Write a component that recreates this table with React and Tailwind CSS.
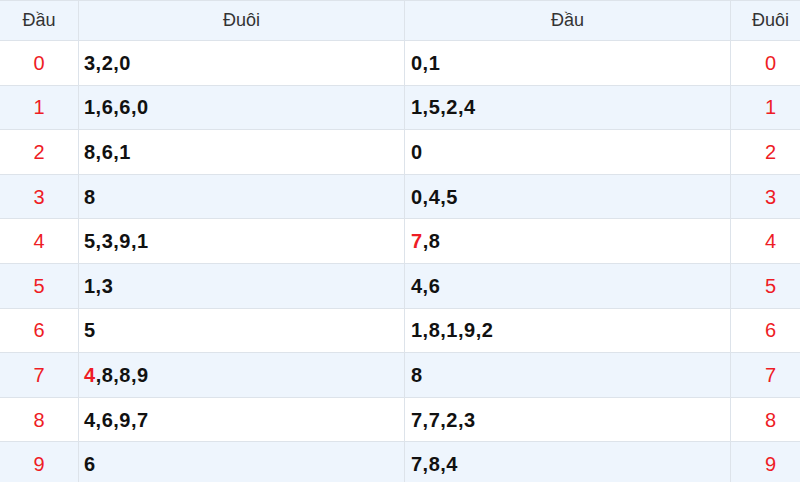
import React from "react";

const rows = [
  { d: "0", left: [["3,2,0"]], right: [["0,1"]] },
  { d: "1", left: [["1,6,6,0"]], right: [["1,5,2,4"]] },
  { d: "2", left: [["8,6,1"]], right: [["0"]] },
  { d: "3", left: [["8"]], right: [["0,4,5"]] },
  { d: "4", left: [["5,3,9,1"]], right: [["7", true], [",8"]] },
  { d: "5", left: [["1,3"]], right: [["4,6"]] },
  { d: "6", left: [["5"]], right: [["1,8,1,9,2"]] },
  { d: "7", left: [["4", true], [",8,8,9"]], right: [["8"]] },
  { d: "8", left: [["4,6,9,7"]], right: [["7,7,2,3"]] },
  { d: "9", left: [["6"]], right: [["7,8,4"]] },
];

function Parts({ parts }) {
  return parts.map(([t, red], i) => (
    <span key={i} className={red ? "text-[#ee1c25]" : ""}>{t}</span>
  ));
}

export default function App() {
  return (
    <div className="w-[800px] h-[482px] overflow-hidden bg-white font-['Liberation_Sans',Arial,sans-serif]">
      <table className="w-[811px] -ml-px border-collapse table-fixed">
        <colgroup>
          <col className="w-[79px]" />
          <col className="w-[326px]" />
          <col className="w-[326px]" />
          <col className="w-[80px]" />
        </colgroup>
        <thead>
          <tr className="h-[40px] bg-[#eef5fd] text-[#333] text-[18px]">
            <th className="font-normal border border-[#dde3ea]">Đầu</th>
            <th className="font-normal border border-[#dde3ea]">Đuôi</th>
            <th className="font-normal border border-[#dde3ea]">Đầu</th>
            <th className="font-normal border border-[#dde3ea]">Đuôi</th>
          </tr>
        </thead>
        <tbody>
          {rows.map((r, i) => (
            <tr key={r.d} className={`h-[44.6px] ${i % 2 ? "bg-[#eef5fd]" : "bg-white"}`}>
              <td className="border border-[#dde3ea] text-center text-[20px] text-[#ee1c25]">{r.d}</td>
              <td className="border border-[#dde3ea] pl-[5px] text-[20px] font-bold text-[#111] tracking-[0.5px]">
                <Parts parts={r.left} />
              </td>
              <td className="border border-[#dde3ea] pl-[6px] text-[20px] font-bold text-[#111] tracking-[0.5px]">
                <Parts parts={r.right} />
              </td>
              <td className="border border-[#dde3ea] text-center text-[20px] text-[#ee1c25]">{r.d}</td>
            </tr>
          ))}
        </tbody>
      </table>
    </div>
  );
}
